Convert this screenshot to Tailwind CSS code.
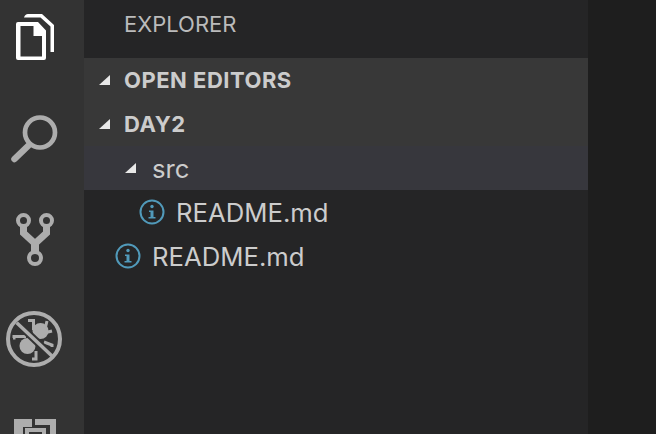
<!DOCTYPE html>
<html><head><meta charset="utf-8"><script src="https://cdn.jsdelivr.net/npm/@tailwindcss/browser@4"></script></head>
<body class="m-0 overflow-hidden bg-[#1e1e1e]">
<div class="flex w-[656px] h-[434px] overflow-hidden font-['Inter','Liberation_Sans',sans-serif] text-[#cccccc]">
  <nav class="w-[84px] shrink-0 bg-[#333333] flex flex-col items-start h-[434px] overflow-hidden">
    <svg class="shrink-0 mt-[14px] ml-[16px]" width="38" height="46" viewBox="0 0 38 46" fill="none">
      <path d="M8 3.500 Q9 0 12 0 H26 L38 11 V38 H34.500 V12.500 L24.500 3.500 Z" fill="#fff"/>
      <path fill-rule="evenodd" d="M2 8 H22 L30 16.500 V44 Q30 46 28 46 H2 Q0 46 0 44 V10 Q0 8 2 8 Z M4.500 12 V42.500 H26 V22 H17.500 V12 Z" fill="#fff"/>
    </svg>
    <svg class="shrink-0 mt-[54px] ml-[10px]" width="50" height="50" viewBox="0 0 50 50" fill="none">
      <circle cx="30" cy="18.500" r="15" stroke="#adadad" stroke-width="4.700"/>
      <path d="M18 32 L4.500 45" stroke="#adadad" stroke-width="6.500" stroke-linecap="round"/>
    </svg>
    <svg class="shrink-0 mt-[48px] ml-[15px]" width="40" height="54" viewBox="0 0 40 54" fill="none" stroke="#adadad">
      <circle cx="8.500" cy="8.500" r="5.500" stroke-width="4"/>
      <circle cx="31.500" cy="8.500" r="5.500" stroke-width="4"/>
      <circle cx="20" cy="46" r="6" stroke-width="4"/>
      <path d="M8.500 14 V21 L20 31.500 L31.500 21 V14" stroke-width="7"/>
      <path d="M20 30 V40" stroke-width="8"/>
    </svg>
    <svg class="shrink-0 mt-[45px] ml-[6px]" width="56" height="56" viewBox="0 0 56 56" fill="none" stroke="#adadad">
      <circle cx="21.500" cy="35" r="8" fill="#adadad" stroke="none"/>
      <circle cx="34.500" cy="20" r="8" fill="#adadad" stroke="none"/>
      <path d="M22 9.500 H27.500 V19 M41 10 L39 18 M46 20 L38 22 M7 27 H8 V25.500 H20 M46 36 V34 L38 31 M26 48 H30 V40" stroke-width="3"/>
      <path d="M10 11 L47 46" stroke="#333333" stroke-width="7.500"/>
      <path d="M10.700 11.700 L46 45" stroke-width="3.500"/>
      <circle cx="28" cy="28" r="26" stroke-width="4"/>
    </svg>
    <svg class="shrink-0 mt-[52px] ml-[14px]" width="42" height="16" viewBox="0 0 42 16" fill="none">
      <path d="M0 0 H18 V8 H9 V16 H0 Z M21 0 H42 V16 H36 V6 H21 Z" fill="#adadad"/>
      <path d="M13 16 V11 H30 V16" stroke="#adadad" stroke-width="4"/>
    </svg>
  </nav>
  <aside class="w-[504px] shrink-0 bg-[#252526] flex flex-col">
    <div class="h-[58px] pl-[40px] pt-[11px] text-[22px] leading-[26px] text-[#bbbbbb]">EXPLORER</div>
    <div class="h-[44px] bg-[#383838] flex items-center pl-[14px] gap-[13px]">
      <svg width="13" height="12" viewBox="0 0 13 12" class="shrink-0"><path d="M12 1 V11 H1 Z" fill="#e8e8e8"/></svg>
      <span class="text-[22px] font-bold tracking-[0.5px] text-[#cccccc] leading-none">OPEN EDITORS</span>
    </div>
    <div class="h-[44px] bg-[#383838] flex items-center pl-[14px] gap-[13px]">
      <svg width="13" height="12" viewBox="0 0 13 12" class="shrink-0"><path d="M12 1 V11 H1 Z" fill="#e8e8e8"/></svg>
      <span class="text-[22px] font-bold tracking-[0.5px] text-[#cccccc] leading-none">DAY2</span>
    </div>
    <div class="h-[44px] bg-[#37373d] flex items-center pl-[40px] gap-[15px]">
      <svg width="13" height="12" viewBox="0 0 13 12" class="shrink-0"><path d="M12 1 V11 H1 Z" fill="#e8e8e8"/></svg>
      <span class="text-[25.700px] text-[#cccccc] leading-none mt-[2px]">src</span>
    </div>
    <div class="h-[44px] flex items-center pl-[55px] gap-[11px]">
      <svg width="26" height="26" viewBox="0 0 26 26" class="shrink-0" fill="none"><circle cx="13" cy="13" r="11.500" stroke="#519aba" stroke-width="2"/><circle cx="13" cy="7.500" r="1.700" fill="#519aba"/><path d="M10 11.500 H14.500 V18 H16.500 V19.500 H9.500 V18 H11.500 V13 H10 Z" fill="#519aba"/></svg>
      <span class="text-[25.700px] text-[#cccccc] leading-none mt-[2px]">README.md</span>
    </div>
    <div class="h-[44px] flex items-center pl-[31px] gap-[11px]">
      <svg width="26" height="26" viewBox="0 0 26 26" class="shrink-0" fill="none"><circle cx="13" cy="13" r="11.500" stroke="#519aba" stroke-width="2"/><circle cx="13" cy="7.500" r="1.700" fill="#519aba"/><path d="M10 11.500 H14.500 V18 H16.500 V19.500 H9.500 V18 H11.500 V13 H10 Z" fill="#519aba"/></svg>
      <span class="text-[25.700px] text-[#cccccc] leading-none mt-[2px]">README.md</span>
    </div>
  </aside>
  <main class="flex-1 bg-[#1e1e1e]"></main>
</div>
</body></html>
